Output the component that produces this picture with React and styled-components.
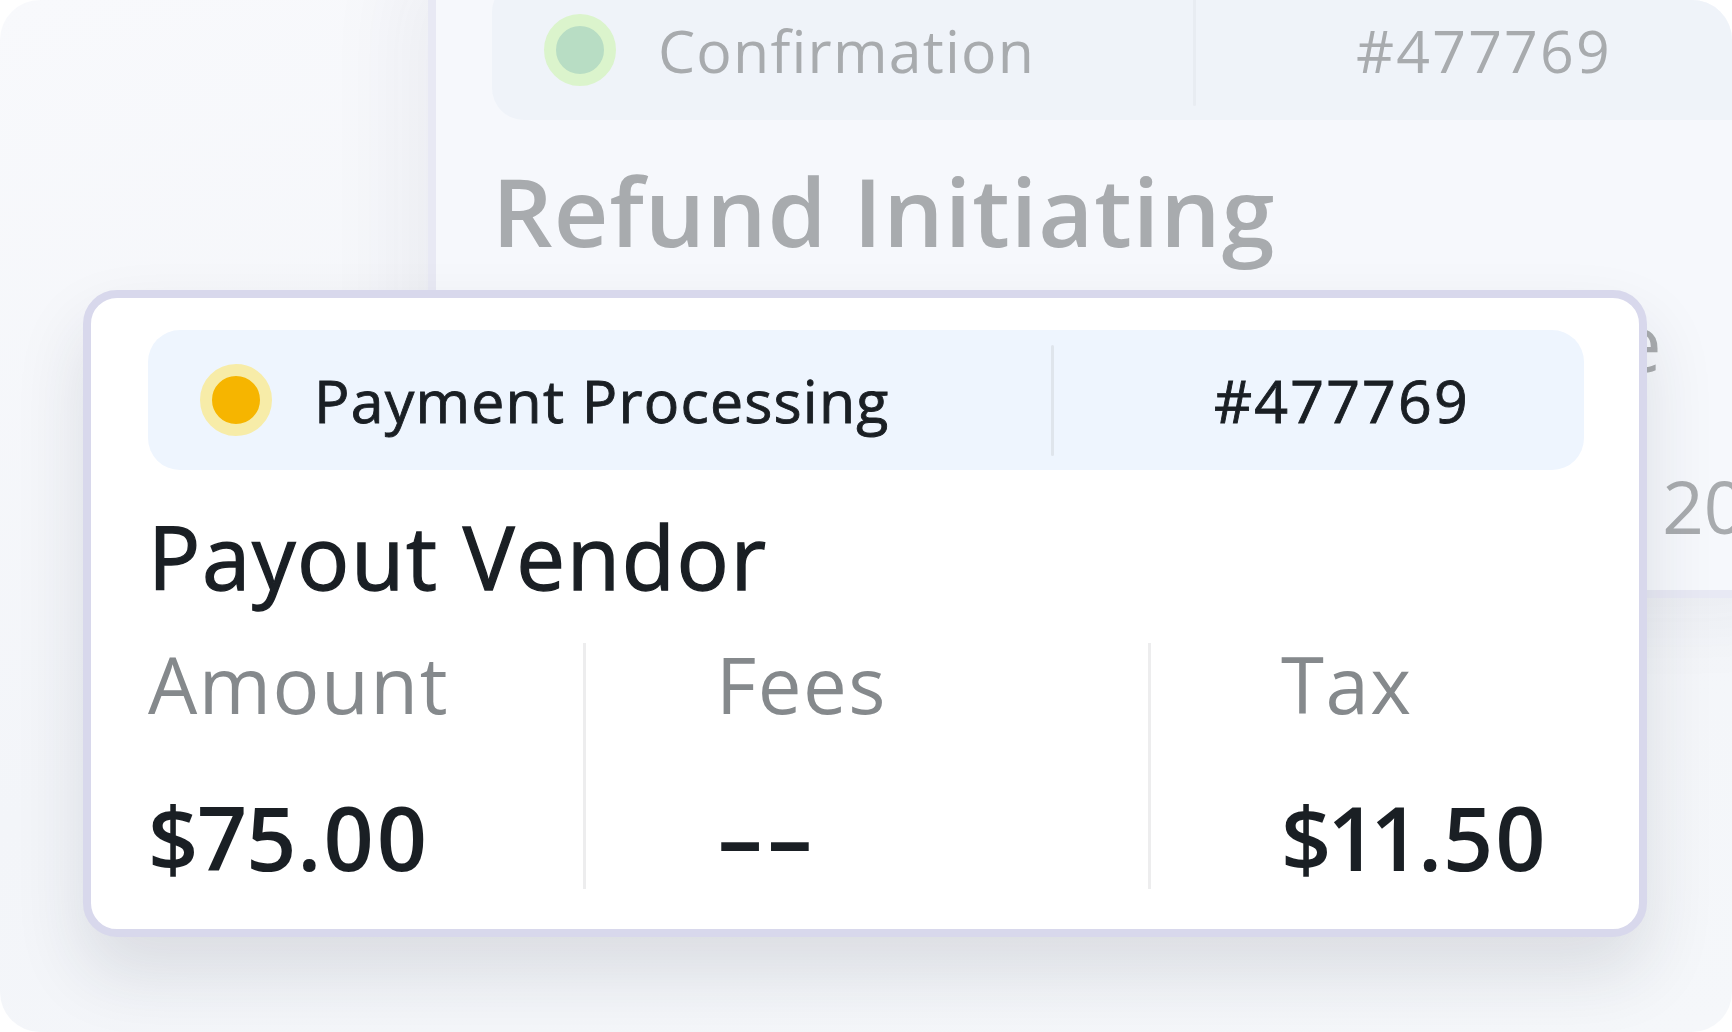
import React from 'react';
import styled, { createGlobalStyle, css } from 'styled-components';

const GlobalStyle = createGlobalStyle`
  html, body {
    margin: 0;
    padding: 0;
    background: #ffffff;
  }

  body {
    font-family: "Open Sans", "Noto Sans", sans-serif;
  }
`;

const Frame = styled.div`
  position: relative;
  width: 1732px;
  height: 1032px;
  border-radius: 40px;
  overflow: hidden;
  background: linear-gradient(165deg, #f8f9fc 0%, #f3f5f9 55%, #f5f7fa 100%);
`;

const Card = styled.section`
  box-sizing: border-box;
  border-radius: 34px;

  ${({ $back }) =>
    $back
      ? css`
          width: 1402px;
          margin: -60px 0 0 428px;
          padding: 32px 56px 40px;
          border: 8px solid #e8e9f4;
          background: #f6f8fc;
          box-shadow: -30px 20px 80px rgba(30, 40, 70, 0.05);
        `
      : css`
          position: absolute;
          left: 83px;
          top: 290px;
          width: 1564px;
          padding: 32px 55px 40px 57px;
          border: 8px solid #d8d8ec;
          background: #ffffff;
          box-shadow: 0 36px 70px rgba(30, 40, 60, 0.12);
        `}
`;

const StatusBar = styled.div`
  display: flex;
  align-items: center;
  height: 140px;
  padding-left: 52px;
  border-radius: 32px;
  background: ${({ $back }) => ($back ? '#eff3f9' : '#eef5fe')};
`;

const Dot = styled.span`
  box-sizing: border-box;
  flex: none;
  width: 72px;
  height: 72px;
  border-radius: 50%;
  border: 12px solid ${({ $ring }) => $ring};
  background: ${({ $core }) => $core};
`;

/* the design font is a medium weight; a thin stroke thickens Open Sans regular */
const medium = css`
  -webkit-text-stroke: ${({ $back }) => ($back ? '0' : '0.9px')} currentColor;
`;

const StatusLabel = styled.span`
  flex: 1;
  margin-left: 42px;
  font-size: 59px;
  line-height: 1;
  letter-spacing: 1.2px;
  color: ${({ $back }) => ($back ? '#a8abae' : '#1a1f24')};
  ${medium}
`;

const StatusDivider = styled.span`
  flex: none;
  width: 3px;
  height: 111px;
  border-radius: 2px;
  background: ${({ $back }) => ($back ? '#e8ecf2' : '#dfe5ec')};
`;

const RefId = styled.span`
  flex: none;
  box-sizing: border-box;
  width: ${({ $back }) => ($back ? '570px' : '530px')};
  padding-left: 160px;
  font-size: 59px;
  line-height: 1;
  letter-spacing: 2.2px;
  color: ${({ $back }) => ($back ? '#a8abae' : '#1a1f24')};
  ${medium}
`;

const Title = styled.h2`
  margin: 43px 0 0;
  line-height: 1;
  ${({ $back }) =>
    $back
      ? css`
          font-size: 95px;
          font-weight: 600;
          letter-spacing: 1px;
          color: #a8abae;
        `
      : css`
          font-size: 87px;
          font-weight: 500;
          letter-spacing: 1.6px;
          color: #1a1f24;
          -webkit-text-stroke: 1.3px currentColor;
        `}
`;

const Metrics = styled.div`
  display: grid;
  grid-template-columns: ${({ $columns }) => $columns};
  margin-top: 43px;
`;

const Metric = styled.div`
  box-sizing: border-box;
  padding: 2px 0 8px;
  ${({ $divided }) =>
    $divided &&
    css`
      padding-left: 130px;
      border-left: 3px solid #ededee;
    `}
  ${({ $end }) => $end && css`justify-self: end;`}
`;

const MetricLabel = styled.div`
  font-size: 78px;
  line-height: 1;
  letter-spacing: 1.5px;
  color: ${({ $back }) => ($back ? '#a8abae' : '#85898c')};
  white-space: nowrap;
`;

const MetricValue = styled.div`
  line-height: 1;
  white-space: nowrap;
  font-variant-numeric: proportional-nums;
  ${({ $back }) =>
    $back
      ? css`
          margin-top: 88px;
          font-size: 73px;
          font-weight: 500;
          color: #a8abae;
        `
      : css`
          margin-top: 70px;
          font-size: 88px;
          font-weight: 600;
          letter-spacing: 1px;
          color: #1a1f24;
        `}
`;

const Placeholder = styled.span`
  display: inline-block;
  transform: scaleX(1.7);
  transform-origin: left center;
`;

function TransactionCard({ back, status, ring, core, refId, title, columns, metrics }) {
  return (
    <Card $back={back}>
      <StatusBar $back={back}>
        <Dot $ring={ring} $core={core} />
        <StatusLabel $back={back}>{status}</StatusLabel>
        <StatusDivider $back={back} />
        <RefId $back={back}>{refId}</RefId>
      </StatusBar>
      <Title $back={back}>{title}</Title>
      <Metrics $columns={columns}>
        {metrics.map((m) => (
          <Metric key={m.key} $divided={!back && m.key !== 'amount'} $end={m.end}>
            <MetricLabel $back={back}>{m.label || '\u00a0'}</MetricLabel>
            <MetricValue $back={back}>
              {m.value === '--' ? <Placeholder>{m.value}</Placeholder> : m.value}
            </MetricValue>
          </Metric>
        ))}
      </Metrics>
    </Card>
  );
}

const refundMetrics = [
  { key: 'amount', label: 'Amount', value: '$120.00' },
  { key: 'source', label: 'Source', value: 'Card', end: true },
  { key: 'date', label: '', value: '2024-06-18' },
];

const payoutMetrics = [
  { key: 'amount', label: 'Amount', value: '$75.00' },
  { key: 'fees', label: 'Fees', value: '--' },
  { key: 'tax', label: 'Tax', value: '$11.50' },
];

export default function App() {
  return (
    <>
      <GlobalStyle />
      <Frame>
        <TransactionCard
          back
          status="Confirmation"
          ring="#dbf4cc"
          core="#b8ddc4"
          refId="#477769"
          title="Refund Initiating"
          columns="560px 611px 1fr"
          metrics={refundMetrics}
        />
        <TransactionCard
          status="Payment Processing"
          ring="#f7eca8"
          core="#f6b500"
          refId="#477769"
          title="Payout Vendor"
          columns="435px 565px 1fr"
          metrics={payoutMetrics}
        />
      </Frame>
    </>
  );
}
